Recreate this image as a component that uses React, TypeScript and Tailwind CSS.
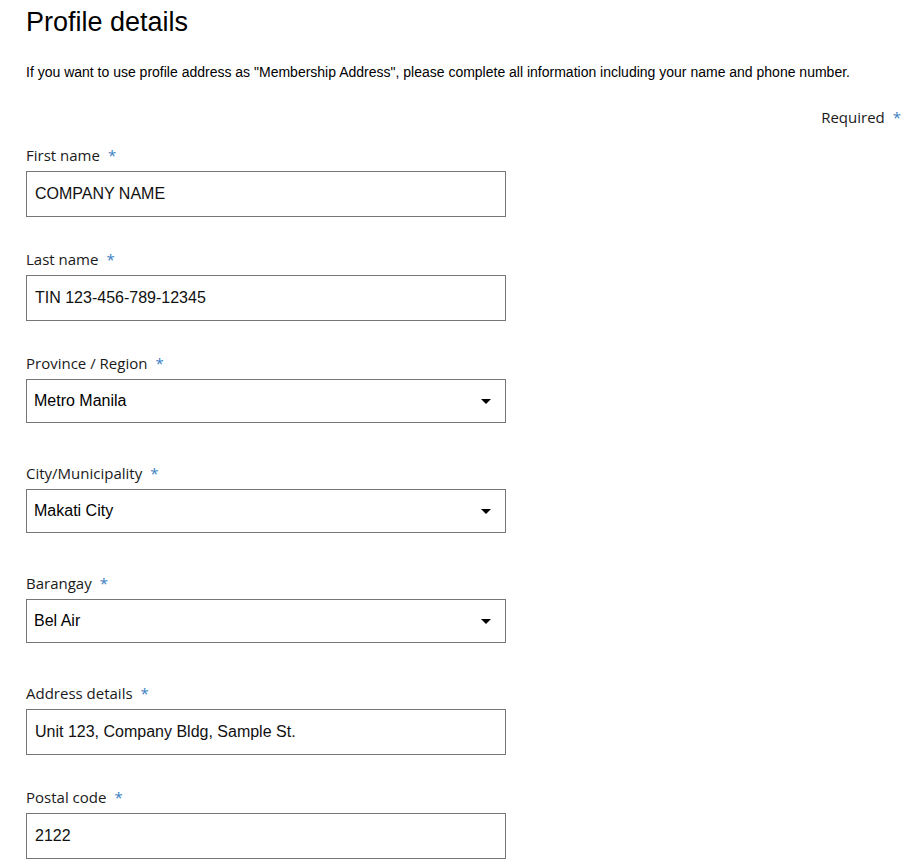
import React from "react";

const arial = { fontFamily: '"Liberation Sans", Arial, sans-serif' };

function Label({ text }: { text: string }) {
  return (
    <div className="h-5 leading-5 text-[15px] text-[#1a1a1a]" style={{ fontFamily: '"Open Sans", "Noto Sans", sans-serif' }}>
      {text}
      <span className="ml-[8px] text-[#3a7fc1]">*</span>
    </div>
  );
}

function TextField({ label, value, last }: { label: string; value: string; last?: boolean }) {
  return (
    <div className={last ? "" : "mb-8"}>
      <Label text={label} />
      <div
        className="mt-[6px] w-[480px] h-[46px] border border-[#767676] flex items-center pl-2 text-[16px] text-[#111]"
        style={arial}
      >
        {value}
      </div>
    </div>
  );
}

function SelectField({ label, value }: { label: string; value: string }) {
  return (
    <div className="mb-10">
      <Label text={label} />
      <div
        className="mt-[6px] w-[480px] h-[44px] border border-[#767676] flex items-center justify-between pl-[7px] pr-[14px] text-[16px] text-[#000]"
        style={arial}
      >
        <span>{value}</span>
        <svg width="10" height="5" viewBox="0 0 10 5">
          <path d="M0 0 L10 0 L5 5 Z" fill="#000" />
        </svg>
      </div>
    </div>
  );
}

export default function App() {
  return (
    <div className="w-[919px] h-[864px] overflow-hidden bg-white pl-[26px] pr-[18px] pt-[6px]">
      <h1 className="text-[27px] leading-[32px] text-[#000]" style={arial}>
        Profile details
      </h1>
      <p className="mt-[24px] text-[14px] leading-5 text-[#000]" style={arial}>
        If you want to use profile address as "Membership Address", please complete all information including your name and phone number.
      </p>
      <div className="mt-[25px] flex justify-end">
        <Label text="Required" />
      </div>
      <div className="mt-[18px]">
        <TextField label="First name" value="COMPANY NAME" />
        <TextField label="Last name" value="TIN 123-456-789-12345" />
        <SelectField label="Province / Region" value="Metro Manila" />
        <SelectField label="City/Municipality" value="Makati City" />
        <SelectField label="Barangay" value="Bel Air" />
        <TextField label="Address details" value="Unit 123, Company Bldg, Sample St." />
        <TextField label="Postal code" value="2122" last />
      </div>
    </div>
  );
}
